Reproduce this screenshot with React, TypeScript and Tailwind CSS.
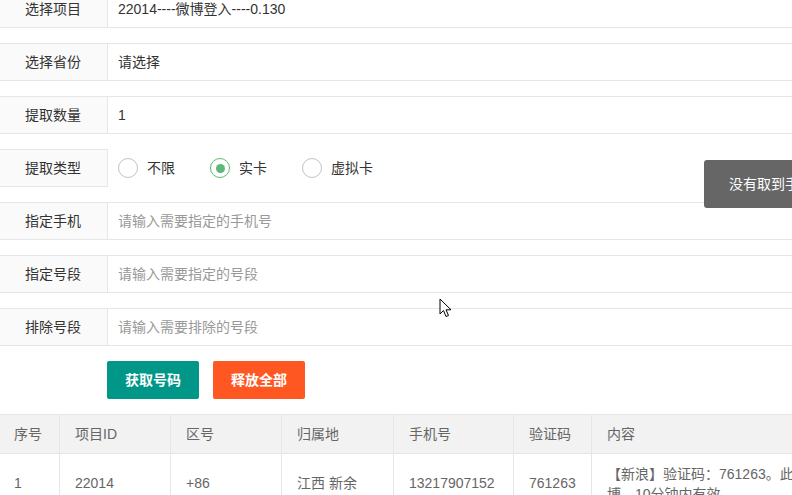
import React from "react";

const font = { fontFamily: '"Liberation Sans", "Noto Sans CJK SC", sans-serif' };

function Row({ label, children, plain }: { label: string; children: React.ReactNode; plain?: boolean }) {
  return (
    <div className="flex h-[38px] mb-[15px]">
      <div className="-ml-[2px] w-[110px] shrink-0 border border-[#e6e6e6] bg-[#fafafa] flex items-center justify-center text-[14px] text-[#333]">
        {label}
      </div>
      {plain ? (
        <div className="flex-1 flex items-center pl-[10px]">{children}</div>
      ) : (
        <div className="flex-1 -mr-[10px] border border-l-0 border-[#e6e6e6] bg-white flex items-center pl-[10px] text-[14px]">
          {children}
        </div>
      )}
    </div>
  );
}

function Radio({ label, checked }: { label: string; checked?: boolean }) {
  return (
    <div className="w-[92px] flex items-center shrink-0">
      <div
        className={
          "w-[20px] h-[20px] rounded-full border-[1.5px] flex items-center justify-center " +
          (checked ? "border-[#5fb878]" : "border-[#c2c2c2]")
        }
      >
        {checked && <div className="w-[9px] h-[9px] rounded-full bg-[#5fb878]" />}
      </div>
      <span className="ml-[9px] text-[14px] text-[#333]">{label}</span>
    </div>
  );
}

const cols = [
  { w: "w-[61px]", h: "序号", d: "1" },
  { w: "w-[111px]", h: "项目ID", d: "22014" },
  { w: "w-[111px]", h: "区号", d: "+86" },
  { w: "w-[112px]", h: "归属地", d: "江西 新余" },
  { w: "w-[120px]", h: "手机号", d: "13217907152" },
  { w: "w-[78px]", h: "验证码", d: "761263" },
];

export default function App() {
  return (
    <div className="relative w-[792px] h-[495px] overflow-hidden bg-white" style={font}>
      <div className="-mt-[10px]">
        <Row label="选择项目">
          <span className="text-[#333]">22014----微博登入----0.130</span>
        </Row>
        <Row label="选择省份">
          <span className="text-[#333]">请选择</span>
        </Row>
        <Row label="提取数量">
          <span className="text-[#333]">1</span>
        </Row>
        <Row label="提取类型" plain>
          <Radio label="不限" />
          <Radio label="实卡" checked />
          <Radio label="虚拟卡" />
        </Row>
        <Row label="指定手机">
          <span className="text-[#999]">请输入需要指定的手机号</span>
        </Row>
        <Row label="指定号段">
          <span className="text-[#999]">请输入需要指定的号段</span>
        </Row>
        <Row label="排除号段">
          <span className="text-[#999]">请输入需要排除的号段</span>
        </Row>
        <div className="flex pl-[107px] gap-[14px]">
          <button className="w-[92px] h-[38px] rounded-[2px] bg-[#009688] text-white text-[14px] font-bold">获取号码</button>
          <button className="w-[92px] h-[38px] rounded-[2px] bg-[#ff5722] text-white text-[14px] font-bold">释放全部</button>
        </div>
        <div className="mt-[15px] -ml-px w-[900px] text-[14px] text-[#666]">
          <div className="flex h-[40px] bg-[#f2f2f2] border-y border-[#e6e6e6]">
            {cols.map((c) => (
              <div key={c.h} className={c.w + " shrink-0 border-r border-[#e6e6e6] pl-[15px] flex items-center"}>
                {c.h}
              </div>
            ))}
            <div className="flex-1 pl-[15px] flex items-center">内容</div>
          </div>
          <div className="flex h-[60px] bg-white border-b border-[#e6e6e6]">
            {cols.map((c) => (
              <div key={c.h} className={c.w + " shrink-0 border-r border-[#e6e6e6] pl-[15px] flex items-center"}>
                {c.d}
              </div>
            ))}
            <div className="w-[200px] pl-[15px] pt-[10px] leading-[20px]">
              <div className="whitespace-nowrap">【新浪】验证码：761263。此验证码用于登录微</div>
              <div className="whitespace-nowrap">博，10分钟内有效</div>
            </div>
          </div>
        </div>
      </div>

      <div className="absolute left-[704px] top-[160px] h-[48px] rounded-[3px] bg-[#666] px-[25px] flex items-center text-white text-[14px] whitespace-nowrap">
        没有取到手机号码
      </div>

      <svg className="absolute left-[439px] top-[298px]" width="14" height="21" viewBox="0 0 14 21">
        <path d="M1 1 L1 16 L4.5 12.5 L7 18.5 L9.5 17.5 L7 11.8 L12 11.8 Z" fill="white" stroke="black" strokeWidth="1" strokeLinejoin="round" />
      </svg>
    </div>
  );
}
